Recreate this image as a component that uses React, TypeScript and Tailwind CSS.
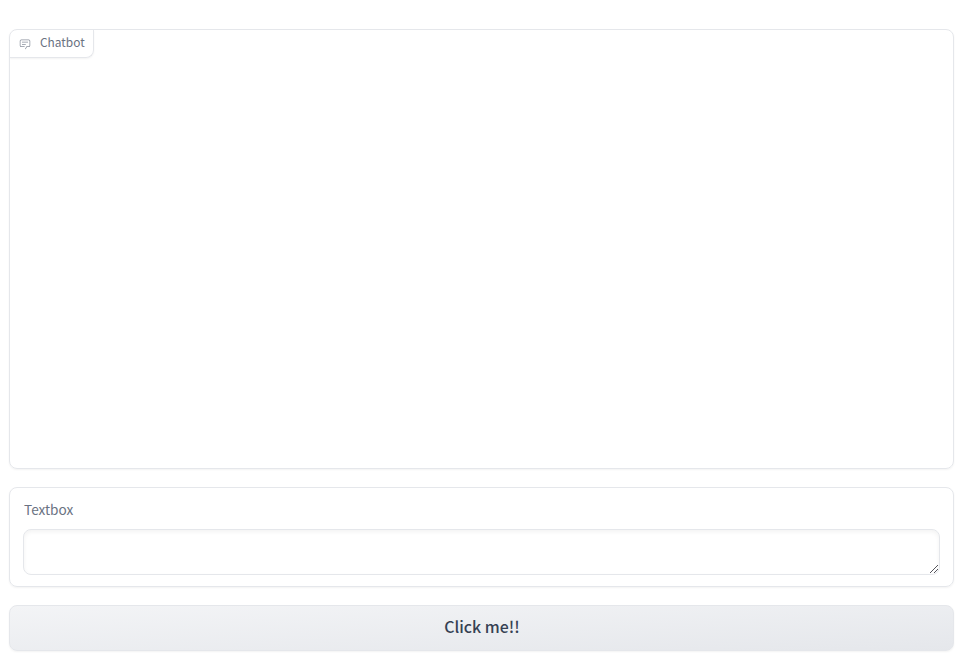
import React, { useState } from 'react';

const ChatIcon: React.FC = () => (
  <svg className="size-3 shrink-0 text-[#8b919d]" viewBox="0 0 32 32" fill="currentColor" aria-hidden="true">
    <path d="M17.74 30L16 29l4-7h6a2 2 0 0 0 2-2V8a2 2 0 0 0-2-2H6a2 2 0 0 0-2 2v12a2 2 0 0 0 2 2h9v2H6a4 4 0 0 1-4-4V8a4 4 0 0 1 4-4h20a4 4 0 0 1 4 4v12a4 4 0 0 1-4 4h-4.84Z" />
    <path d="M8 10h16v2H8zm0 6h10v2H8z" />
  </svg>
);

// Diagonal grip in the corner of the message field
const ResizeGrip: React.FC = () => (
  <svg
    className="pointer-events-none absolute right-px bottom-0.5 size-[9px] text-[#55555c]"
    viewBox="0 0 9 9"
    fill="currentColor"
    shapeRendering="crispEdges"
    aria-hidden="true"
  >
    <path d="M0 8h1v1H0zM1 7h1v1H1zM2 6h1v1H2zM3 5h1v1H3zM4 4h1v1H4zM5 3h1v1H5zM6 2h1v1H6zM7 1h1v1H7z" />
    <path d="M4 8h1v1H4zM5 7h1v1H5zM6 6h1v1H6zM7 5h1v1H7z" />
  </svg>
);

const App: React.FC = () => {
  const [message, setMessage] = useState('');

  return (
    <main className="flex h-[665px] flex-col gap-[18px] bg-white pt-[29px] pr-3 pl-[9px] font-['Noto_Sans_CJK_SC',sans-serif]">
      {/* Chat history */}
      <section className="h-[440px] shrink-0 overflow-hidden rounded-lg border border-gray-200 shadow-[0_1px_2px_0_rgba(0,0,0,0.05)]">
        <div className="flex h-7 w-21 items-center gap-[9px] rounded-br-lg border-r border-b border-gray-200 pl-[9px] shadow-[0_1px_2px_0_rgba(0,0,0,0.05)]">
          <ChatIcon />
          <span className="pb-[3px] text-[11.9px] leading-4 text-gray-500">Chatbot</span>
        </div>
      </section>

      {/* Message input */}
      <label className="block h-[100px] shrink-0 rounded-lg border border-gray-200 px-[13px] pt-[11px] shadow-[0_1px_2px_0_rgba(0,0,0,0.05)]">
        <span className="mb-2.5 block pl-px text-[13.6px] leading-5 text-gray-500">Textbox</span>
        <div className="relative">
          <textarea
            value={message}
            onChange={(e) => setMessage(e.target.value)}
            className="block h-[46px] w-full resize-none overflow-hidden rounded-lg border border-gray-200 px-3 py-2.5 shadow-[inset_0_2px_4px_0_rgba(0,0,0,0.05)] outline-none"
          />
          <ResizeGrip />
        </div>
      </label>

      <button
        onClick={() => setMessage('')}
        className="h-[46px] shrink-0 rounded-lg border border-gray-200 bg-linear-to-br from-gray-100 to-gray-200 pb-0.5 pl-px text-[15.9px] leading-6 font-medium text-gray-700 shadow-[0_1px_2px_0_rgba(0,0,0,0.05)]"
      >
        Click me!!
      </button>
    </main>
  );
};

export default App;
